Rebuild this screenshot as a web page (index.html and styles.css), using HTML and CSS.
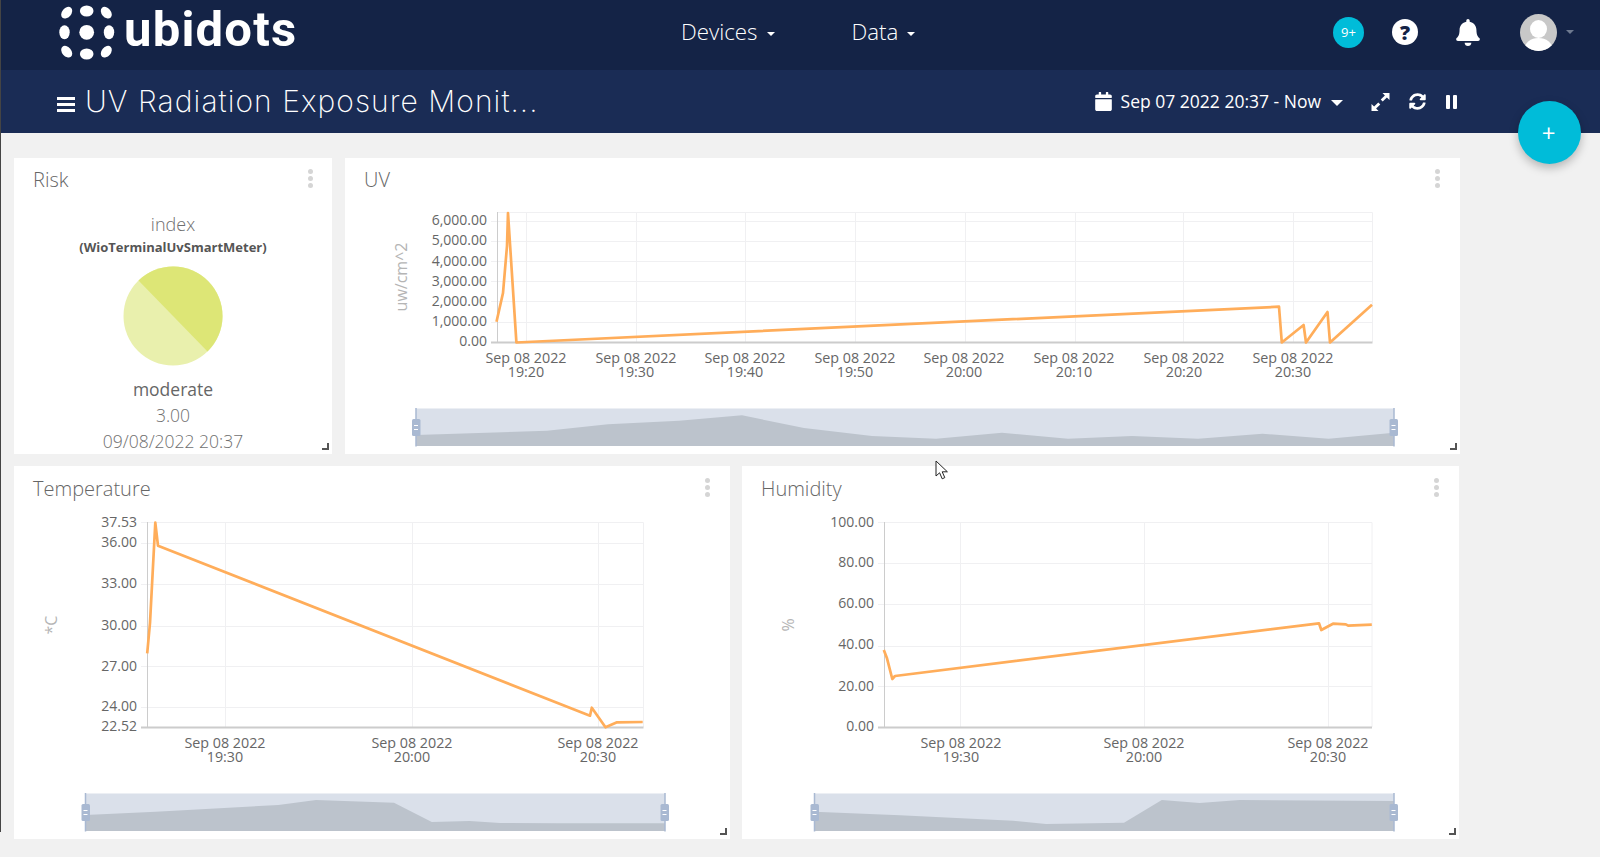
FILE: index.html
```html
<!DOCTYPE html>
<html lang="en">
<head>
    <meta charset="UTF-8">
    <title>UV Radiation Exposure Monitor</title>
    <link rel="stylesheet" href="styles.css">
</head>
<body>
    <!-- Top navigation -->
    <header class="navbar">
        <a class="logo">
            <svg class="logo-dots" width="56" height="56" viewBox="59 4 56 56">
                <ellipse cx="66.7" cy="12.7" rx="4.6" ry="6.6" transform="rotate(40 66.7 12.7)"/>
                <ellipse cx="86.7" cy="11" rx="6.8" ry="5.6"/>
                <ellipse cx="106.3" cy="12.7" rx="4.6" ry="6.6" transform="rotate(-40 106.3 12.7)"/>
                <ellipse cx="64.5" cy="32.3" rx="5.2" ry="7"/>
                <circle cx="86.7" cy="32.3" r="7.4"/>
                <ellipse cx="109" cy="32.3" rx="5.2" ry="7"/>
                <ellipse cx="66.7" cy="51.7" rx="4.6" ry="6.6" transform="rotate(-40 66.7 51.7)"/>
                <ellipse cx="86.7" cy="54" rx="6.8" ry="5.6"/>
                <ellipse cx="106.3" cy="51.7" rx="4.6" ry="6.6" transform="rotate(40 106.3 51.7)"/>
            </svg>
            <span class="logo-text">ubidots</span>
        </a>
        <nav class="main-menu">
            <a class="menu-item">Devices <i class="caret"></i></a>
            <a class="menu-item">Data <i class="caret"></i></a>
        </nav>
        <div class="nav-right">
            <span class="badge">9+</span>
            <span class="help">?</span>
            <svg class="bell" width="24" height="27" viewBox="0 0 448 512"><path d="M224 512c35.32 0 63.97-28.65 63.97-64H160.03c0 35.35 28.65 64 63.97 64zm215.39-149.71c-19.32-20.76-55.47-51.99-55.47-154.29 0-77.7-54.48-139.9-127.94-155.16V32c0-17.67-14.32-32-31.98-32s-31.98 14.33-31.98 32v20.84C118.56 68.1 64.08 130.3 64.08 208c0 102.3-36.15 133.53-55.47 154.29-6 6.45-8.66 14.16-8.61 21.71.11 16.4 12.98 32 32.1 32h383.8c19.12 0 32-15.6 32.1-32 .05-7.55-2.61-15.27-8.61-21.71z"/></svg>
            <span class="user">
                <svg class="avatar" width="37" height="37" viewBox="0 0 37 37">
                    <clipPath id="avatarClip"><circle cx="18.5" cy="18.5" r="18.5"/></clipPath>
                    <g clip-path="url(#avatarClip)">
                        <rect width="37" height="37" fill="#c8c8c8"/>
                        <ellipse cx="18.5" cy="15" rx="8.5" ry="9" fill="#fff"/>
                        <ellipse cx="18.5" cy="35" rx="14" ry="11" fill="#fff"/>
                    </g>
                </svg>
                <i class="caret caret-muted"></i>
            </span>
        </div>
    </header>

    <!-- Dashboard bar -->
    <div class="subbar">
        <span class="burger"><i></i><i></i><i></i></span>
        <h1 class="dash-title">UV Radiation Exposure Monit...</h1>
        <div class="dash-tools">
            <svg class="calendar" width="17" height="19" viewBox="0 0 448 512"><path d="M12 192h424c6.6 0 12 5.4 12 12v260c0 26.5-21.5 48-48 48H48c-26.5 0-48-21.5-48-48V204c0-6.6 5.4-12 12-12zm436-44v-36c0-26.5-21.5-48-48-48h-48V12c0-6.6-5.4-12-12-12h-40c-6.6 0-12 5.4-12 12v52H160V12c0-6.6-5.4-12-12-12h-40c-6.6 0-12 5.4-12 12v52H48C21.5 64 0 85.5 0 112v36c0 6.6 5.4 12 12 12h424c6.6 0 12-5.4 12-12z"/></svg>
            <span class="date-range">Sep 07 2022 20:37 - Now</span>
            <i class="caret caret-big"></i>
            <svg class="expand" width="19" height="18" viewBox="0 0 18 18"><path d="M11 0h7v7l-2.6-2.6-4.2 4.2-2-2 4.2-4.2z"/><path d="M7 18H0v-7l2.6 2.6 4.2-4.2 2 2-4.2 4.2z"/></svg>
            <svg class="refresh" width="17" height="17" viewBox="0 0 512 512"><path d="M370.72 133.28C339.458 104.008 298.888 87.962 255.848 88c-77.458.068-144.328 53.178-162.791 126.85-1.344 5.363-6.122 9.15-11.651 9.15H24.103c-7.498 0-13.194-6.807-11.807-14.176C33.933 94.924 134.813 8 256 8c66.448 0 126.791 26.136 171.315 68.685L463.03 40.97C478.149 25.851 504 36.559 504 57.941V192c0 13.255-10.745 24-24 24H345.941c-21.382 0-32.09-25.851-16.971-40.971l41.75-41.749zM32 296h134.059c21.382 0 32.09 25.851 16.971 40.971l-41.75 41.75c31.262 29.273 71.835 45.319 114.876 45.28 77.418-.07 144.315-53.144 162.787-126.849 1.344-5.363 6.122-9.15 11.651-9.15h57.304c7.498 0 13.194 6.807 11.807 14.176C478.067 417.076 377.187 504 256 504c-66.448 0-126.791-26.136-171.315-68.685L48.97 471.03C33.851 486.149 8 475.441 8 454.059V320c0-13.255 10.745-24 24-24z"/></svg>
            <span class="pause"><i></i><i></i></span>
        </div>
    </div>

    <!-- Widgets -->
    <main class="board">
        <div class="row row-top">
            <section class="card card-risk">
                <div class="card-head"><h2>Risk</h2><span class="kebab"><i></i><i></i><i></i></span></div>
                <div class="risk-body">
                    <div class="risk-name">index</div>
                    <div class="risk-device">(WioTerminalUvSmartMeter)</div>
                    <svg class="pie" width="100" height="100" viewBox="0 0 100 100">
                        <circle cx="50" cy="50" r="49.5" fill="#e9f0ad"/>
                        <path d="M15.5 14.5A49.5 49.5 0 0 1 84.5 85.5z" fill="#dde676"/>
                    </svg>
                    <div class="risk-state">moderate</div>
                    <div class="risk-value">3.00</div>
                    <div class="risk-value">09/08/2022 20:37</div>
                </div>
            </section>

            <section class="card card-uv">
                <div class="card-head"><h2>UV</h2><span class="kebab"><i></i><i></i><i></i></span></div>
                <svg class="chart" width="1115" height="252" viewBox="345 202 1115 252">
                    <path class="grid" d="M497 212.5H1372.5V342M491 221.5H1372.5M491 241.5H1372.5M491 261.5H1372.5M491 281.5H1372.5M491 301.5H1372.5M491 322.5H1372.5M526.5 212V343M636.5 212V343M745.5 212V343M855.5 212V343M965.5 212V343M1075.5 212V343M1183.5 212V343M1293.5 212V343"/>
                    <path class="axis" d="M497.5 212V343"/>
                    <path class="axis axis-x" d="M491 342.5H1372.5"/>
                    <polyline class="line" points="496.5,321.7 503,293 507,246 508,213 516.4,342.5 1279,306.7 1281.8,342.5 1303.6,325 1306,342.5 1327.5,312 1330,342.5 1372,304.7"/>
                    <g class="ticks-y">
                        <text x="487" y="225">6,000.00</text>
                        <text x="487" y="245">5,000.00</text>
                        <text x="487" y="266">4,000.00</text>
                        <text x="487" y="286">3,000.00</text>
                        <text x="487" y="306">2,000.00</text>
                        <text x="487" y="326">1,000.00</text>
                        <text x="487" y="346">0.00</text>
                    </g>
                    <g class="ticks-x">
                        <text x="526" y="363">Sep 08 2022<tspan x="526" dy="14">19:20</tspan></text>
                        <text x="636" y="363">Sep 08 2022<tspan x="636" dy="14">19:30</tspan></text>
                        <text x="745" y="363">Sep 08 2022<tspan x="745" dy="14">19:40</tspan></text>
                        <text x="855" y="363">Sep 08 2022<tspan x="855" dy="14">19:50</tspan></text>
                        <text x="964" y="363">Sep 08 2022<tspan x="964" dy="14">20:00</tspan></text>
                        <text x="1074" y="363">Sep 08 2022<tspan x="1074" dy="14">20:10</tspan></text>
                        <text x="1184" y="363">Sep 08 2022<tspan x="1184" dy="14">20:20</tspan></text>
                        <text x="1293" y="363">Sep 08 2022<tspan x="1293" dy="14">20:30</tspan></text>
                    </g>
                    <text class="axis-name" transform="translate(407 277) rotate(-90)">uw/cm^2</text>
                    <rect class="zoom-bg" x="416" y="408.5" width="978" height="37.5"/>
                    <polygon class="zoom-area" points="416,435 547,430.7 608,424.3 679,420.7 742,415.3 804,428 872,436 936,438.7 1002,432.7 1068,438.7 1132,436 1198,438.7 1262.5,433.7 1328.6,438.7 1394,432.7 1394,446 416,446"/>
                    <path class="zoom-edge" d="M416 408V446.5M1394 408V446.5"/>
                    <g class="zoom-handle"><rect x="412" y="419" width="8.5" height="17" rx="1.5"/><path d="M414 425.5h4M414 429.5h4"/></g>
                    <g class="zoom-handle"><rect x="1389.5" y="419" width="8.5" height="17" rx="1.5"/><path d="M1391.5 425.5h4M1391.5 429.5h4"/></g>
                </svg>
            </section>
        </div>

        <div class="row row-bottom">
            <section class="card card-temp">
                <div class="card-head"><h2>Temperature</h2><span class="kebab"><i></i><i></i><i></i></span></div>
                <svg class="chart" width="716" height="329" viewBox="14 510 716 329">
                    <path class="grid" d="M141 522.5H643.5V727M141 543.5H643.5M141 584.5H643.5M141 626.5H643.5M141 666.5H643.5M141 707.5H643.5M225.5 522V728M412.5 522V728M598.5 522V728"/>
                    <path class="axis" d="M147.5 522V728"/>
                    <path class="axis axis-x" d="M141 727.5H643.5"/>
                    <polyline class="line" points="147.2,653.3 150,623 155.3,522.7 158,545.7 590,715.7 591.8,707.7 605.5,727.3 617,722.3 642.7,722"/>
                    <g class="ticks-y">
                        <text x="137" y="527">37.53</text>
                        <text x="137" y="547">36.00</text>
                        <text x="137" y="588">33.00</text>
                        <text x="137" y="630">30.00</text>
                        <text x="137" y="671">27.00</text>
                        <text x="137" y="711">24.00</text>
                        <text x="137" y="731">22.52</text>
                    </g>
                    <g class="ticks-x">
                        <text x="225" y="748">Sep 08 2022<tspan x="225" dy="14">19:30</tspan></text>
                        <text x="412" y="748">Sep 08 2022<tspan x="412" dy="14">20:00</tspan></text>
                        <text x="598" y="748">Sep 08 2022<tspan x="598" dy="14">20:30</tspan></text>
                    </g>
                    <text class="axis-name" transform="translate(57 625) rotate(-90)">*C</text>
                    <rect class="zoom-bg" x="85.5" y="793.5" width="579.5" height="37.5"/>
                    <polygon class="zoom-area" points="85.5,815 155.7,811.7 278.4,805 316,800 394,802.7 431.8,822 469.6,821 500,823 557,823.3 665,823.3 665,831 85.5,831"/>
                    <path class="zoom-edge" d="M85.5 793V831.5M665 793V831.5"/>
                    <g class="zoom-handle"><rect x="81.5" y="804" width="8.5" height="17" rx="1.5"/><path d="M83.5 810.5h4M83.5 814.5h4"/></g>
                    <g class="zoom-handle"><rect x="660.5" y="804" width="8.5" height="17" rx="1.5"/><path d="M662.5 810.5h4M662.5 814.5h4"/></g>
                </svg>
            </section>

            <section class="card card-hum">
                <div class="card-head"><h2>Humidity</h2><span class="kebab"><i></i><i></i><i></i></span></div>
                <svg class="chart" width="717" height="329" viewBox="742 510 717 329">
                    <path class="grid" d="M878 522.5H1372V727M878 563.5H1372M878 604.5H1372M878 646.5H1372M878 686.5H1372M960.5 522V728M1144.5 522V728M1328.5 522V728"/>
                    <path class="axis" d="M884.5 522V728"/>
                    <path class="axis axis-x" d="M878 727.5H1372"/>
                    <polyline class="line" points="883.8,650 887,658.3 892.3,679 895,676 1319,623.3 1321.3,630 1333,623.7 1345.8,624.3 1348.2,625.7 1371.8,624.7"/>
                    <g class="ticks-y">
                        <text x="874" y="527">100.00</text>
                        <text x="874" y="567">80.00</text>
                        <text x="874" y="608">60.00</text>
                        <text x="874" y="649">40.00</text>
                        <text x="874" y="691">20.00</text>
                        <text x="874" y="731">0.00</text>
                    </g>
                    <g class="ticks-x">
                        <text x="961" y="748">Sep 08 2022<tspan x="961" dy="14">19:30</tspan></text>
                        <text x="1144" y="748">Sep 08 2022<tspan x="1144" dy="14">20:00</tspan></text>
                        <text x="1328" y="748">Sep 08 2022<tspan x="1328" dy="14">20:30</tspan></text>
                    </g>
                    <text class="axis-name" transform="translate(794 625) rotate(-90)">%</text>
                    <rect class="zoom-bg" x="814.5" y="793.5" width="579.5" height="37.5"/>
                    <polygon class="zoom-area" points="814.5,811.7 900,815.3 1013,820.7 1046,824 1124,822.7 1161.8,800 1199.6,803 1239.7,800 1394,801 1394,831 814.5,831"/>
                    <path class="zoom-edge" d="M814.5 793V831.5M1394 793V831.5"/>
                    <g class="zoom-handle"><rect x="810.5" y="804" width="8.5" height="17" rx="1.5"/><path d="M812.5 810.5h4M812.5 814.5h4"/></g>
                    <g class="zoom-handle"><rect x="1389.5" y="804" width="8.5" height="17" rx="1.5"/><path d="M1391.5 810.5h4M1391.5 814.5h4"/></g>
                </svg>
            </section>
        </div>
    </main>

    <!-- Add widget button -->
    <button class="fab">+</button>

    <!-- Window edge and mouse pointer caught in the capture -->
    <div class="window-edge"></div>
    <svg class="pointer" width="14" height="20" viewBox="0 0 14 20"><path d="M1 1V16L4.6 12.8 7.2 18.8 9.8 17.6 7.2 11.8H12.4z" fill="#fff" stroke="#222" stroke-width="1"/></svg>
</body>
</html>
```

FILE: styles.css
```css
/* Reset default margin and padding */
* {
    margin: 0;
    padding: 0;
    box-sizing: border-box;
}

body {
    position: relative;
    height: 857px;
    overflow: hidden;
    background-color: #f1f1f1;
    font-family: "Open Sans", "Liberation Sans", sans-serif;
    color: #666;
}

i {
    display: block;
}

/* Top navigation */
.navbar {
    display: flex;
    align-items: center;
    height: 70px;
    padding: 0 26px 6px 59px;
    background-color: #142346;
    color: #fff;
}

.logo {
    display: flex;
    align-items: center;
    width: 622px;
    gap: 9px;
}

.logo-dots {
    fill: #fff;
    flex: none;
}

.logo-text {
    font-family: "Roboto", "Liberation Sans", sans-serif;
    font-weight: 700;
    font-size: 49px;
    line-height: 56px;
    letter-spacing: 1.2px;
    margin-top: -5px;
}

.main-menu {
    display: flex;
    gap: 77px;
    margin-top: -2px;
}

.menu-item {
    display: flex;
    align-items: center;
    gap: 9px;
    font-size: 22.3px;
    font-weight: 300;
}

.caret {
    width: 0;
    height: 0;
    margin-top: 5px;
    border-left: 4.5px solid transparent;
    border-right: 4.5px solid transparent;
    border-top: 4px solid #fff;
}

.caret-muted {
    margin-top: 0;
    border-top-color: #6e7a90;
}

.caret-big {
    margin: 2px 0 0 10px;
    border-left-width: 6px;
    border-right-width: 6px;
    border-top-width: 6px;
}

.nav-right {
    display: flex;
    align-items: center;
    margin-left: auto;
}

.badge {
    display: flex;
    align-items: center;
    justify-content: center;
    width: 31px;
    height: 31px;
    border-radius: 50%;
    background-color: #00bcd9;
    font-size: 13px;
}

.help {
    display: flex;
    align-items: center;
    justify-content: center;
    width: 26px;
    height: 26px;
    margin-left: 28px;
    border-radius: 50%;
    background-color: #fff;
    color: #142346;
    font-size: 20px;
    font-weight: 800;
}

.bell {
    fill: #fff;
    margin-left: 38px;
}

.user {
    display: flex;
    align-items: center;
    gap: 9px;
    margin-left: 40px;
}

/* Dashboard bar */
.subbar {
    display: flex;
    align-items: center;
    height: 63px;
    padding: 0 0 0 57px;
    background-color: #1a2c55;
    color: #fff;
}

.burger {
    display: flex;
    flex-direction: column;
    gap: 3px;
    width: 18px;
    margin-top: 6px;
}

.burger i {
    height: 3px;
    background-color: #fff;
}

.dash-title {
    margin: -2px 0 0 10px;
    font-family: "Inter", "Open Sans", sans-serif;
    font-size: 30px;
    font-weight: 200;
    letter-spacing: 1.05px;
    white-space: nowrap;
}

.dash-tools {
    display: flex;
    align-items: center;
    margin-left: auto;
    padding-right: 143px;
}

.calendar,
.expand,
.refresh {
    fill: #fff;
}

.date-range {
    margin: -2px 0 0 9px;
    font-size: 17.5px;
}

.expand {
    margin-left: 28px;
}

.refresh {
    margin-left: 19px;
}

.pause {
    display: flex;
    gap: 3px;
    margin-left: 20px;
}

.pause i {
    width: 4px;
    height: 14px;
    border-radius: 1px;
    background-color: #fff;
}

/* Widgets */
.board {
    padding: 25px 0 0 14px;
}

.row {
    display: flex;
}

.row-top {
    gap: 13px;
    height: 296px;
}

.row-bottom {
    gap: 12px;
    height: 373px;
    margin-top: 12px;
}

.row-bottom h2 {
    margin-top: 1px;
}

.row-bottom .kebab {
    margin-top: 4px;
}

.card {
    position: relative;
    background-color: #fff;
    overflow: hidden;
}

.card-risk { width: 318px; }
.card-uv { width: 1115px; }
.card-temp { width: 716px; }
.card-hum { width: 717px; }

/* Resize handle in the corner of each card */
.card::after {
    content: "";
    position: absolute;
    right: 3px;
    bottom: 4px;
    width: 7px;
    height: 7px;
    background:
        linear-gradient(#555, #555) right bottom / 7px 2px no-repeat,
        linear-gradient(#555, #555) right bottom / 2px 7px no-repeat;
}

.card-head {
    display: flex;
    align-items: flex-start;
    justify-content: space-between;
    height: 44px;
    padding: 8px 20px 0 19px;
}

.card-risk .card-head {
    padding-right: 19px;
}

.card-head h2 {
    font-size: 20px;
    font-weight: 300;
    line-height: 28px;
    color: #666;
}

.kebab {
    display: flex;
    flex-direction: column;
    gap: 2px;
    margin-top: 3px;
}

.kebab i {
    width: 5px;
    height: 5px;
    border-radius: 50%;
    background-color: #d5d5d5;
}

/* Risk card */
.risk-body {
    display: flex;
    flex-direction: column;
    align-items: center;
    margin-top: 9px;
    color: #6f6f6f;
}

.risk-name {
    font-size: 18px;
    font-weight: 300;
    line-height: 26px;
}

.risk-device {
    font-size: 13px;
    font-weight: 700;
    line-height: 20px;
    color: #555;
}

.pie {
    display: block;
    margin: 9px 0 10px;
}

.risk-state {
    font-size: 17.5px;
    line-height: 27px;
    color: #666;
}

.risk-value {
    font-size: 17.5px;
    font-weight: 300;
    line-height: 25.5px;
}

/* Charts */
.chart {
    display: block;
}

.chart text {
    font-family: "Open Sans", "Liberation Sans", sans-serif;
    font-size: 14px;
}

.grid {
    fill: none;
    stroke: #f0f0f2;
    stroke-width: 1;
}

.axis {
    fill: none;
    stroke: #ccc;
    stroke-width: 1;
}

.axis-x {
    stroke-width: 2;
}

.line {
    fill: none;
    stroke: #ffad5a;
    stroke-width: 2.7;
    stroke-linejoin: round;
}

.ticks-y text {
    fill: #666;
    text-anchor: end;
}

.chart .ticks-x text {
    fill: #666;
    text-anchor: middle;
    font-size: 14.3px;
}

.chart .axis-name {
    fill: #b5b5b5;
    text-anchor: middle;
    font-size: 16px;
}

.zoom-bg {
    fill: #dae0ea;
}

.zoom-area {
    fill: #bcc3cc;
}

.zoom-edge {
    fill: none;
    stroke: #a9b9d2;
    stroke-width: 1.5;
}

.zoom-handle rect {
    fill: #a9b9d2;
}

.zoom-handle path {
    fill: none;
    stroke: #fff;
    stroke-width: 1.2;
}

/* Floating button */
.fab {
    position: absolute;
    left: 1518px;
    top: 101px;
    width: 63px;
    height: 63px;
    padding-right: 2px;
    border: none;
    border-radius: 50%;
    background-color: #00bcd9;
    box-shadow: 0 4px 10px rgba(0,0,0,0.25);
    color: #fff;
    font-family: "Open Sans", sans-serif;
    font-size: 24px;
    line-height: 60px;
}

.window-edge {
    position: absolute;
    left: 0;
    top: 0;
    width: 1px;
    height: 832px;
    background-color: #444;
}

.pointer {
    position: absolute;
    left: 935px;
    top: 460px;
}
```
